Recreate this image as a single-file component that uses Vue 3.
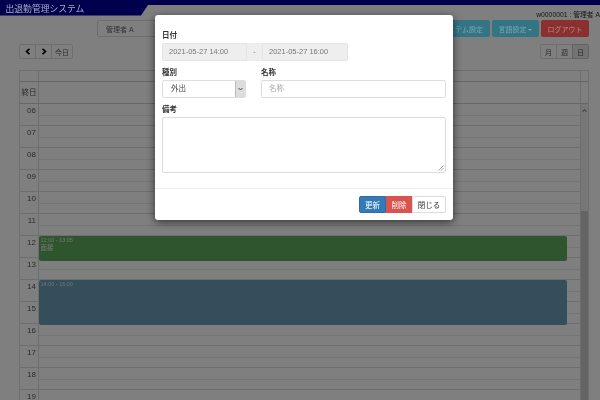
<script setup>
const hours = ['06','07','08','09','10','11','12','13','14','15','16','17','18','19']
</script>

<template>
  <div class="page">
    <header class="topbar">
      <div class="tab"><span class="title">出退勤管理システム</span></div>
      <div class="strip"></div>
    </header>
    <div class="user">w0000001 : 管理者 A</div>
    <nav class="nav">
      <button class="btn who">管理者 A</button>
      <div class="spacer"></div>
      <button class="btn info sys">システム設定</button>
      <button class="btn info lang">言語設定 <i class="caret"></i></button>
      <button class="btn danger logout">ログアウト</button>
    </nav>
    <div class="tools">
      <div class="group">
        <button class="gbtn arrow">
          <svg width="6" height="7" viewBox="0 0 6 7"><path d="M4.5 0.8 L1.6 3.5 L4.5 6.2" fill="none" stroke="#000" stroke-width="1.7"/></svg>
        </button>
        <button class="gbtn arrow">
          <svg width="6" height="7" viewBox="0 0 6 7"><path d="M1.5 0.8 L4.4 3.5 L1.5 6.2" fill="none" stroke="#000" stroke-width="1.7"/></svg>
        </button>
        <button class="gbtn today">今日</button>
      </div>
      <div class="group">
        <button class="gbtn view">月</button>
        <button class="gbtn view">週</button>
        <button class="gbtn view on">日</button>
      </div>
    </div>
    <section class="cal">
      <div class="cal-head"><div class="c-time"></div><div class="c-main"></div><div class="c-sb"></div></div>
      <div class="cal-all"><div class="c-time">終日</div><div class="c-main"></div><div class="c-sb"></div></div>
      <div class="cal-body">
        <div class="rows">
          <div v-for="h in hours" :key="h" class="hour">
            <div class="h-label">{{ h }}</div>
            <div class="h-cells"><div class="half"></div><div class="half"></div></div>
          </div>
          <div class="event green">
            <div class="ev-time">12:00 - 13:05</div>
            <div class="ev-title">面接</div>
          </div>
          <div class="event blue">
            <div class="ev-time">14:00 - 16:00</div>
          </div>
        </div>
        <div class="scroll">
          <div class="sb-arrow">
            <svg width="5" height="3" viewBox="0 0 5 3"><path d="M0.5 2.6 L2.5 0.8 L4.5 2.6" fill="none" stroke="#333" stroke-width="0.9"/></svg>
          </div>
          <div class="sb-thumb"></div>
        </div>
      </div>
    </section>

    <div class="backdrop"></div>
    <div class="modal">
      <div class="m-body">
        <label class="lab">日付</label>
        <div class="dates">
          <div class="field ro">2021-05-27 14:00</div>
          <div class="addon">-</div>
          <div class="field ro">2021-05-27 16:00</div>
        </div>
        <div class="two">
          <div class="col-a">
            <label class="lab">種別</label>
            <div class="field sel">
              <span>外出</span>
              <span class="sel-btn">
                <svg width="5" height="4" viewBox="0 0 5 4"><path d="M0.5 1 L2.5 3 L4.5 1" fill="none" stroke="#333" stroke-width="0.9"/></svg>
              </span>
            </div>
          </div>
          <div class="col-b">
            <label class="lab">名称</label>
            <div class="field ph">名称</div>
          </div>
        </div>
        <label class="lab">備考</label>
        <div class="area">
          <svg class="grip" width="6" height="6" viewBox="0 0 6 6"><path d="M0.5 5.5 L5.5 0.5 M3 5.5 L5.5 3" stroke="#888" stroke-width="0.7"/></svg>
        </div>
      </div>
      <div class="m-foot">
        <button class="fbtn upd">更新</button>
        <button class="fbtn del">削除</button>
        <button class="fbtn cls">閉じる</button>
      </div>
    </div>
  </div>
</template>

<style>
html, body { margin: 0; overflow: hidden; }
</style>

<style scoped>
.page {
  position: relative;
  width: 600px;
  height: 400px;
  overflow: hidden;
  background: #fff;
  font-family: "Liberation Sans", "Noto Sans CJK JP", sans-serif;
  font-size: 8px;
  color: #333;
  filter: blur(0.3px);
}
button { font-family: inherit; margin: 0; padding: 0; cursor: default; }

.topbar { display: flex; height: 16px; }
.tab {
  position: relative;
  z-index: 2;
  width: 149px;
  height: 16px;
  background: #00004f;
  clip-path: polygon(0 0, 100% 0, 100% 5px, 148px 5px, 141px 15.5px, 0 15.5px);
  display: flex;
  align-items: flex-end;
  padding-left: 5.5px;
  box-sizing: border-box;
}
.title { color: #a9afc2; font-size: 8.8px; line-height: 13px; }
.strip { position: relative; z-index: 2; flex: 1; height: 5px; background: #00004f; }

.user {
  position: absolute;
  top: 11px;
  right: 0;
  font-size: 6.8px;
  line-height: 8px;
  color: #333;
  white-space: nowrap;
}

.nav { display: flex; height: 17px; margin-top: 4px; padding: 0 11px 0 97px; gap: 2px; }
.spacer { flex: 1; }
.btn { height: 17px; border-radius: 2px; font-size: 7px; border: 1px solid; box-sizing: border-box; }
.who { width: 70px; background: #fff; border-color: #ddd; color: #666; text-align: left; padding-left: 8px; }
.info { position: relative; z-index: 2; background: #337585; border-color: #337585; color: #79a8b4; }
.sys { width: 60px; padding-left: 4px; }
.lang { width: 47px; }
.logout { width: 48px; }
.danger { position: relative; z-index: 2; background: #8a3030; border-color: #8a3030; color: #c48a8a; font-size: 7px; }
.caret {
  display: inline-block;
  width: 0; height: 0;
  border: 2px solid transparent;
  border-top-color: #79a8b4;
  border-bottom: 0;
  vertical-align: middle;
}

.tools { display: flex; justify-content: space-between; padding: 7px 11px 0 19px; }
.group { display: flex; }
.gbtn {
  height: 15px;
  background: #fff;
  border: 1px solid #ddd;
  margin-left: -1px;
  font-size: 7px;
  color: #555;
  box-sizing: border-box;
  display: flex;
  align-items: center;
  justify-content: center;
}
.gbtn:first-child { margin-left: 0; border-radius: 2px 0 0 2px; }
.gbtn:last-child { border-radius: 0 2px 2px 0; }
.arrow { width: 17px; }
.today { width: 22px; }
.view { width: 17px; }
.on { background: #e6e6e6; border-color: #c4c4c4; }

.cal { margin: 11px 11px 0 19px; border: 1px solid #ddd; border-bottom: 0; }
.cal-head, .cal-all { display: flex; border-bottom: 1px solid #ccc; }
.cal-head { height: 10px; }
.cal-all { height: 21px; }
.c-time {
  width: 18px;
  border-right: 1px solid #ddd;
  font-size: 7.5px;
  line-height: 21px;
  text-align: center;
  color: #555;
}
.c-main { flex: 1; }
.c-sb { width: 7px; border-left: 1px solid #ddd; }
.cal-body { display: flex; height: 300px; overflow: hidden; }
.rows { flex: 1; position: relative; }
.hour { display: flex; height: 22px; border-bottom: 1px solid #ddd; box-sizing: border-box; }
.h-label {
  width: 16px;
  padding-right: 2px;
  border-right: 1px solid #ddd;
  font-size: 8px;
  line-height: 13px;
  text-align: right;
  color: #555;
}
.h-cells { flex: 1; }
.half { height: 10.5px; }
.half:first-child { border-bottom: 1px solid #eaeaea; }
.event {
  position: absolute;
  left: 19px;
  width: 527.5px;
  border-radius: 2px;
  color: #fff;
  box-sizing: border-box;
  padding: 1px 1.5px;
}
.green { top: 132px; height: 25px; background: #5fab5f; }
.blue { top: 176px; height: 45px; background: #6a9cb8; }
.ev-time { font-size: 5.5px; line-height: 7px; opacity: .75; }
.ev-title { font-size: 6.5px; line-height: 8px; opacity: .8; }
.scroll { width: 7px; border-left: 1px solid #ddd; display: flex; flex-direction: column; background: #eee; }
.sb-arrow { height: 107px; display: flex; justify-content: center; padding-top: 5px; box-sizing: border-box; }
.sb-thumb { flex: 1; background: #c8c8c8; }

.backdrop { position: absolute; inset: 0; z-index: 1; background: rgba(0,0,0,.5); }
.modal {
  position: absolute;
  z-index: 3;
  left: 155px;
  top: 15px;
  width: 298px;
  height: 205px;
  background: #fff;
  border-radius: 3px;
  box-shadow: 0 2px 8px rgba(0,0,0,.6);
  box-sizing: border-box;
  display: flex;
  flex-direction: column;
}
.m-body { flex: 1; padding: 16px 7px 0 7px; display: flex; flex-direction: column; }
.lab { display: block; font-size: 7.5px; font-weight: 700; line-height: 10px; color: #333; height: 12px; }
.dates { display: flex; width: 186px; height: 18px; margin-bottom: 7px; }
.field {
  box-sizing: border-box;
  height: 18px;
  border: 1px solid #ddd;
  border-radius: 2px;
  font-size: 7.5px;
  line-height: 16px;
  padding: 0 6px;
  color: #666;
  background: #fff;
}
.ro { width: 85px; background: #eee; color: #777; border-color: #e4e4e4; padding-left: 6px; }
.ro:first-child { border-radius: 2px 0 0 2px; }
.ro:last-child { border-radius: 0 2px 2px 0; width: 86px; }
.addon { width: 15px; background: #eee; text-align: center; line-height: 18px; font-size: 7.5px; color: #777; }
.two { display: flex; gap: 15px; margin-bottom: 7px; }
.col-a { width: 84px; }
.col-b { flex: 1; }
.sel { display: flex; justify-content: space-between; padding: 0 0 0 8px; color: #444; overflow: hidden; }
.sel-btn {
  width: 9px;
  background: #ddd;
  border-left: 1px solid #bbb;
  display: flex;
  align-items: center;
  justify-content: center;
}
.ph { color: #aaa; padding-left: 7px; }
.area {
  position: relative;
  height: 56px;
  border: 1px solid #ddd;
  border-radius: 2px;
  box-sizing: border-box;
}
.grip { position: absolute; right: 1px; bottom: 1px; }
.m-foot {
  height: 32px;
  border-top: 1px solid #eee;
  display: flex;
  justify-content: flex-end;
  padding: 7px 7px 0 0;
  box-sizing: border-box;
}
.fbtn {
  height: 17px;
  border: 1px solid;
  font-size: 7.5px;
  box-sizing: border-box;
  color: #fff;
}
.upd { width: 27px; background: #337ab7; border-color: #2e6da4; border-radius: 2px 0 0 2px; }
.del { width: 26px; background: #d9534f; border-color: #d9534f; }
.cls { width: 34px; background: #fff; border-color: #ddd; color: #333; border-radius: 0 2px 2px 0; }
</style>
